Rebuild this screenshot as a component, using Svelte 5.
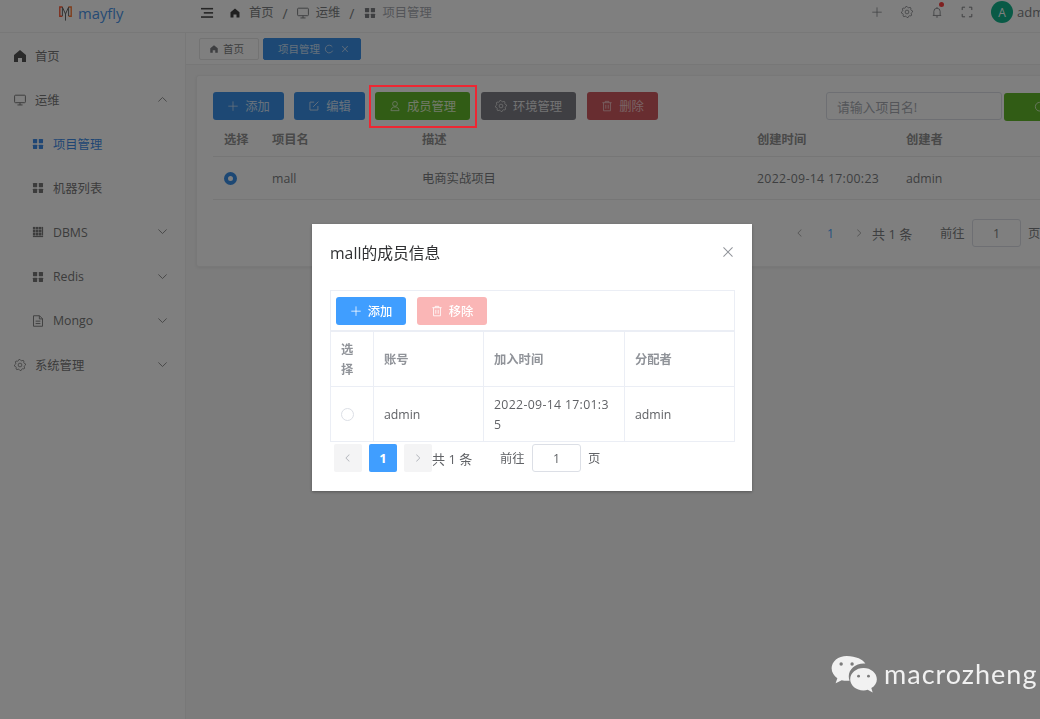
<script>
  function gearPath() {
    const n = 8, pts = [];
    for (let i = 0; i < n * 4; i++) {
      const a = (i / (n * 4)) * Math.PI * 2 - 0.2;
      const r = i % 4 < 2 ? 7.5 : 6;
      pts.push((8 + r * Math.cos(a)).toFixed(2) + ' ' + (8 + r * Math.sin(a)).toFixed(2));
    }
    return 'M' + pts.join('L') + 'Z';
  }
  const gear = gearPath();
  const home = 'M512 128 128 447.936V896h255.936V640H640v256h255.936V447.936z';
  const plus = 'M480 480V128a32 32 0 0 1 64 0v352h352a32 32 0 1 1 0 64H544v352a32 32 0 1 1-64 0V544H128a32 32 0 0 1 0-64h352z';
  const close = 'M764.288 214.592 512 466.88 259.712 214.592a31.936 31.936 0 0 0-45.12 45.12L466.752 512 214.528 764.224a31.936 31.936 0 1 0 45.12 45.184L512 557.184l252.288 252.288a31.936 31.936 0 0 0 45.12-45.12L557.12 512.064l252.288-252.352a31.936 31.936 0 1 0-45.12-45.184z';
  const left = 'M609.408 149.376 277.76 489.6a32 32 0 0 0 0 44.672l331.648 340.352a29.12 29.12 0 0 0 41.728 0 30.592 30.592 0 0 0 0-42.752L339.264 511.936l311.872-319.872a30.592 30.592 0 0 0 0-42.688 29.12 29.12 0 0 0-41.728 0z';
  const right = 'M340.864 149.312a30.592 30.592 0 0 0 0 42.752L652.736 512 340.864 831.872a30.592 30.592 0 0 0 0 42.752 29.12 29.12 0 0 0 41.728 0L714.24 534.336a32 32 0 0 0 0-44.672L382.592 149.376a29.12 29.12 0 0 0-41.728 0z';
</script>

{#snippet fill(d, cls = '')}
  <svg class={'ic ' + cls} viewBox="0 0 1024 1024"><path d={d} fill="currentColor" /></svg>
{/snippet}
{#snippet gearIcon(cls = '')}
  <svg class={'ic ' + cls} viewBox="0 0 16 16" fill="none" stroke="currentColor" stroke-width="1"><path d={gear} stroke-linejoin="round" /><circle cx="8" cy="8" r="2.5" /></svg>
{/snippet}
{#snippet monitor(cls = '')}
  <svg class={'ic ' + cls} viewBox="0 0 16 16" fill="none" stroke="currentColor" stroke-width="1.3"><rect x=".8" y="1.6" width="14.4" height="10" rx="1.2" /><path d="M4.600 14.600h6.800M8 11.600v3" /></svg>
{/snippet}
{#snippet grid(cls = '')}
  <svg class={'ic ' + cls} viewBox="0 0 16 16"><g fill="currentColor"><rect x="1.300" y="1.300" width="5.600" height="5.600" rx=".6" /><rect x="9.100" y="1.300" width="5.600" height="5.600" rx=".6" /><rect x="1.300" y="9.100" width="5.600" height="5.600" rx=".6" /><rect x="9.100" y="9.100" width="5.600" height="5.600" rx=".6" /></g></svg>
{/snippet}
{#snippet dbms(cls = '')}
  <svg class={'ic ' + cls} viewBox="1.400 1.400 13.400 13.400"><g fill="currentColor">{#each [2.4, 5.8, 9.2] as y}{#each [2.4, 5.8, 9.2] as x}<rect x={x} y={y} width="2.900" height="2.900" />{/each}{/each}<rect x="12.600" y="2.400" width="1.200" height="9.700" /><rect x="2.400" y="12.600" width="11.400" height="1.200" /></g></svg>
{/snippet}
{#snippet doc(cls = '')}
  <svg class={'ic ' + cls} viewBox="0 0 16 16" fill="none" stroke="currentColor" stroke-width="1.2"><path d="M2 1h8l4 4v10H2zM9.800 1v4.200H14M4.800 8.200h6.400M4.800 11.400h6.400" /></svg>
{/snippet}
{#snippet chevron(up = false)}
  <svg class="chev" viewBox="0 0 12 12" fill="none" stroke="currentColor" stroke-width="1"><path d={up ? 'M1.500 8.200 6 3.800l4.500 4.400' : 'M1.500 3.800 6 8.200l4.500-4.400'} /></svg>
{/snippet}
{#snippet user()}
  <svg class="ic" viewBox="0 0 16 16" fill="none" stroke="currentColor" stroke-width="1.100"><circle cx="8" cy="5.200" r="3.200" /><path d="M2.600 14.200c0-3.200 2.400-5 5.400-5s5.400 1.800 5.400 5z" /></svg>
{/snippet}
{#snippet edit()}
  <svg class="ic" viewBox="0 0 16 16" fill="none" stroke="currentColor" stroke-width="1.200"><path d="M8.200 2.800H2.600v10.600h10.600V8M6.800 9.200l7-7" /></svg>
{/snippet}
{#snippet trash()}
  <svg class="ic" viewBox="0 0 16 16" fill="none" stroke="currentColor" stroke-width="1.100"><path d="M1.800 3.600h12.400M5.600 3.400V1.800h4.800v1.600M3.400 3.600v10.800h9.200V3.600M6.400 6.400v5.200M9.600 6.400v5.200" /></svg>
{/snippet}
{#snippet search()}
  <svg class="ic" viewBox="0 0 16 16" fill="none" stroke="currentColor" stroke-width="1.100"><circle cx="7.600" cy="7.600" r="5.800" /><path d="m11.800 11.800 2.400 2.400" /></svg>
{/snippet}

<div class="shell">
  <header class="topbar">
    <div class="brand">
      <svg class="logo" viewBox="0 0 13 15" fill="none">
        <path d="M3.600 1H.8v9.200h2.600" stroke="#ff5a35" stroke-width="1.400" />
        <path d="M9.400 1h2.800v9.200H9.600" stroke="#ff7a35" stroke-width="1.400" />
        <path d="M3.400 10V1.200L6.500 8l3.100-6.800V10M6.500 8v6.600" stroke="#666" stroke-width="1" />
      </svg>
      <span class="brand-name">mayfly</span>
    </div>
    <div class="crumbs">
      <svg class="burger" viewBox="0 0 14 12" fill="currentColor"><rect x="0" y=".5" width="13" height="1.700" /><rect x="3" y="5" width="10" height="1.700" /><rect x="0" y="9.500" width="13" height="1.700" /></svg>
      {@render fill(home, 'crumb-home')}
      <span class="crumb-text">首页</span><span class="sep">/</span>
      {@render monitor('crumb-ic')}
      <span class="crumb-text">运维</span><span class="sep">/</span>
      {@render grid('crumb-ic')}
      <span class="crumb-text muted">项目管理</span>
    </div>
    <div class="tools">
      {@render fill(plus, 'tool')}
      {@render gearIcon('tool')}
      <span class="bell"><svg class="ic tool" viewBox="0 0 16 16" fill="none" stroke="currentColor" stroke-width="1.100"><path d="M2.400 12.600h11.200M3.800 12.400V7.200a4.200 4.200 0 0 1 8.400 0v5.200M6.600 14.600h2.800M8 1.400v1.600" /></svg><i class="dot"></i></span>
      <svg class="ic tool" viewBox="0 0 16 16" fill="none" stroke="currentColor" stroke-width="1.300"><path d="M1.600 5.400v-3.800h3.800M10.600 1.600h3.800v3.800M14.400 10.600v3.800h-3.800M5.400 14.400H1.600v-3.800" /></svg>
      <span class="avatar">A</span>
      <span class="uname">admin</span>
    </div>
  </header>

  <div class="body">
    <aside class="side">
      <div class="item top">{@render fill(home, 'mi-home')}<span>首页</span></div>
      <div class="item top">{@render monitor('mi')}<span>运维</span>{@render chevron(true)}</div>
      <div class="item sub active">{@render grid('mi')}<span>项目管理</span></div>
      <div class="item sub">{@render grid('mi')}<span>机器列表</span></div>
      <div class="item sub">{@render dbms('mi')}<span>DBMS</span>{@render chevron()}</div>
      <div class="item sub">{@render grid('mi')}<span>Redis</span>{@render chevron()}</div>
      <div class="item sub">{@render doc('mi')}<span>Mongo</span>{@render chevron()}</div>
      <div class="item top">{@render gearIcon('mi')}<span>系统管理</span>{@render chevron()}</div>
    </aside>

    <main class="main">
      <div class="tags">
        <span class="tag">{@render fill(home, 'tag-ic')}首页</span>
        <span class="tag on">项目管理<svg class="ic tag-ic" viewBox="0 0 12 12" fill="none" stroke="currentColor" stroke-width="1"><path d="M10 3.400A4.600 4.600 0 1 0 10.400 8" /></svg>{@render fill(close, 'tag-ic tag-x')}</span>
      </div>
      <div class="content">
        <section class="card">
          <div class="bar">
            <button class="btn blue">{@render fill(plus)}添加</button>
            <button class="btn blue">{@render edit()}编辑</button>
            <button class="btn green">{@render user()}成员管理</button>
            <button class="btn gray">{@render gearIcon()}环境管理</button>
            <button class="btn red">{@render trash()}删除</button>
            <span class="search-input">请输入项目名!</span>
            <button class="btn green search-btn">{@render search()}</button>
          </div>
          <table class="grid-table">
            <colgroup><col class="c1" /><col class="c2" /><col class="c3" /><col class="c4" /><col class="c5" /></colgroup>
            <thead><tr><th>选择</th><th>项目名</th><th>描述</th><th>创建时间</th><th>创建者</th></tr></thead>
            <tbody><tr><td><i class="radio on"></i></td><td>mall</td><td>电商实战项目</td><td class="date">2022-09-14 17:00:23</td><td>admin</td></tr></tbody>
          </table>
          <div class="pager-main">
            <span class="pg-arrow">{@render fill(left)}</span>
            <span class="pg-num">1</span>
            <span class="pg-arrow">{@render fill(right)}</span>
            <span class="pg-total">共 1 条</span>
            <span class="pg-go">前往</span>
            <span class="pg-input">1</span>
            <span>页</span>
          </div>
        </section>
      </div>
    </main>
  </div>
</div>

<div class="mask"></div>

<div class="dialog">
  <div class="dlg-head">
    <span class="dlg-title">mall的成员信息</span>
    {@render fill(close, 'dlg-close')}
  </div>
  <div class="dlg-tools">
    <button class="btn dlg-blue">{@render fill(plus)}添加</button>
    <button class="btn dlg-red">{@render trash()}移除</button>
  </div>
  <table class="dlg-table">
    <colgroup><col class="d1" /><col class="d2" /><col class="d3" /><col class="d4" /></colgroup>
    <thead><tr><th>选择</th><th>账号</th><th>加入时间</th><th>分配者</th></tr></thead>
    <tbody><tr><td><i class="radio"></i></td><td>admin</td><td class="date">2022-09-14 17:01:35</td><td>admin</td></tr></tbody>
  </table>
  <div class="dlg-pager">
    <span class="dp-box">{@render fill(left)}</span>
    <span class="dp-box cur">1</span>
    <span class="dp-box">{@render fill(right)}</span>
    <span class="dp-total">共 1 条</span>
    <span class="dp-go">前往</span>
    <span class="pg-input">1</span>
    <span>页</span>
  </div>
</div>

<div class="callout"></div>

<div class="mark">
  <svg class="mark-ic" viewBox="0 0 50 42">
    <path d="M17.500 2C8.400 2 1.500 7.800 1.500 15c0 4.200 2.400 8 6 10.400l-1.800 5.400 6.400-3.300c1.800.5 3.600.7 5.400.7 1 0 1.900-.1 2.800-.2-.5-1.500-.8-3-.8-4.600 0-7.400 7-13.400 15.700-13.400.6 0 1.100 0 1.700.1C34.800 5.900 26.900 2 17.500 2z" fill="#f1f1f1" />
    <circle cx="11.500" cy="10.500" r="1.800" fill="#7c7c7c" /><circle cx="23" cy="10.500" r="1.800" fill="#7c7c7c" />
    <path d="M49 26.500C49 20 42.700 14.800 35 14.800S21 20 21 26.500 27.300 38.200 35 38.200c1.500 0 3-.2 4.400-.6l5.200 2.700-1.400-4.500C46.800 33.700 49 30.300 49 26.500z" fill="#f1f1f1" />
    <circle cx="29.800" cy="23.300" r="1.500" fill="#7c7c7c" /><circle cx="40.200" cy="23.300" r="1.500" fill="#7c7c7c" />
  </svg>
  <span class="mark-text">macrozheng</span>
</div>

<style>
  :global(body) {
    margin: 0;
    overflow: hidden;
    background: #f8f8f8;
  }
  :global(#app) {
    font-family: 'Open Sans', 'Noto Sans CJK SC', sans-serif;
    font-size: 12.3px;
    color: #7c7e82;
  }
  .shell { width: 1100px; height: 719px; display: flex; flex-direction: column; }
  .ic { width: 12px; height: 12px; flex: none; display: block; }

  .topbar { height: 33px; flex: none; box-sizing: border-box; padding-bottom: 8px; display: flex; align-items: center; background: #fff; border-bottom: 1px solid #f0f0f0; }
  .brand { width: 186px; flex: none; display: flex; align-items: center; padding-left: 59px; padding-top: 2px; box-sizing: border-box; gap: 6px; }
  .logo { width: 13px; height: 15px; }
  .brand-name { font-size: 14.800px; color: #4c96ea; line-height: 1; }
  .crumbs { display: flex; align-items: center; color: #7c7e82; padding-left: 15px; padding-top: 2px; }
  .burger { width: 13px; height: 12px; color: #4a4a4a; margin-right: 15px; }
  :global(svg.ic.crumb-home) { margin-right: 8px; color: #404040; }
  :global(svg.ic.crumb-ic) { margin-right: 7px; }
  .crumb-text { line-height: 1; }
  .muted { color: #a8abb2; }
  .sep { margin: 0 9px; font-size: 14px; }
  .tools { margin-left: auto; display: flex; align-items: center; color: #7c7e82; }
  :global(svg.ic.tool) { width: 12px; height: 12px; margin-right: 18px; }
  .bell { position: relative; display: block; }
  .dot { position: absolute; top: -4px; left: 8px; width: 5px; height: 5px; border-radius: 50%; background: #ff4040; }
  .avatar { width: 22px; height: 22px; border-radius: 50%; background: #13b58d; color: #fff; display: flex; align-items: center; justify-content: center; font-size: 12px; }
  .uname { margin-left: 4px; width: 83px; font-size: 13px; }

  .body { flex: 1; display: flex; min-height: 0; }
  .side { width: 186px; flex: none; background: #fff; border-right: 1px solid #f0f0f0; box-sizing: border-box; padding-top: 1px; }
  .item { height: 44.100px; display: flex; align-items: center; position: relative; color: #787878; }
  .item.top { padding-left: 14px; }
  .item.sub { padding-left: 32px; }
  .item span { margin-left: 9px; }
  :global(svg.ic.mi) { width: 12px; height: 12px; }
  :global(svg.ic.mi-home) { width: 16px; height: 16px; margin: 0 -2px; color: #555; }
  .item.active, .item.active span { color: #3f8de8; }
  .chev { width: 11px; height: 11px; position: absolute; left: 157px; top: 50%; margin-top: -6px; color: #888; }

  .main { flex: 1; min-width: 0; display: flex; flex-direction: column; }
  .tags { height: 32px; flex: none; background: #fff; border-bottom: 1px solid #eee; box-sizing: border-box; display: flex; align-items: center; padding-left: 13px; gap: 4px; }
  .tag { width: 60px; height: 22px; box-sizing: border-box; display: flex; align-items: center; gap: 4px; white-space: nowrap; font-size: 10.500px; padding: 0 0 0 9px; border: 1px solid #e6e6e6; border-radius: 2px; color: #7c7e82; background: #fff; }
  .tag.on { background: #3b90e8; border-color: #3b90e8; color: #c9e0f7; padding: 0 0 0 14px; width: 98px; }
  :global(svg.ic.tag-ic) { width: 10px; height: 10px; }
  :global(svg.ic.tag-x) { margin-left: 2px; }
  .content { padding: 10px 0 0 10px; }
  .card { background: #fff; border: 1px solid #f0f0f0; border-radius: 3px; height: 192px; box-sizing: border-box; padding: 16px 16px; box-shadow: 0 1px 3px rgba(0, 0, 0, 0.06); }
  .bar { display: flex; align-items: flex-start; height: 30px; }
  .btn { height: 28px; border: 0; border-radius: 3px; display: inline-flex; align-items: center; justify-content: center; gap: 6px; font: inherit; color: #fff; padding: 0; margin: 0; }
  .blue { width: 71px; background: #3b90e8; margin-right: 10px; color: #cfe3f8; }
  .green { width: 95px; background: #62b82a; margin-right: 11px; color: #e2f5d4; }
  .gray { width: 95px; background: #7e7e86; margin-right: 11px; color: #e6e6e6; }
  .red { width: 71px; background: #d05a60; color: #f3c9cb; margin-right: 168px; }
  .search-input { width: 176px; height: 28px; box-sizing: border-box; border: 1px solid #dcdfe6; border-radius: 3px; display: flex; align-items: center; padding-left: 10px; color: #a8abb2; font-size: 12.800px; }
  .search-btn { margin-left: 2px; width: 71px; height: 28px; margin-top: 1px; margin-right: 0; }

  table { border-collapse: collapse; table-layout: fixed; }
  .grid-table { width: 833px; }
  .c1 { width: 48px; } .c2 { width: 150px; } .c3 { width: 335px; } .c4 { width: 149px; } .c5 { width: 151px; }
  .grid-table th { height: 34px; padding: 0 11px; text-align: left; font-weight: 700; color: #929292; border-bottom: 1px solid #ececec; }
  .grid-table td { height: 42px; padding: 0 11px; border-bottom: 1px solid #ececec; color: #7c7e82; }
  .date { letter-spacing: 0.32px; }
  .radio { display: block; width: 13px; height: 13px; box-sizing: border-box; border-radius: 50%; border: 1px solid #dcdfe6; background: #fff; }
  .radio.on { border: 4px solid #3b90e8; }
  .pager-main { display: flex; align-items: center; height: 28px; margin-top: 19px; padding-left: 582px; }
  .pg-arrow { width: 12px; display: block; color: #a0a0a0; }
  :global(.pg-arrow svg.ic) { width: 10px; height: 10px; }
  .pg-num { width: 47px; text-align: center; color: #4aa5ff; font-weight: 500; }
  .pg-total { margin-left: 6px; width: 68px; font-size: 13px; }
  .pg-go { width: 32px; }
  .pg-input { width: 49px; height: 28px; box-sizing: border-box; border: 1px solid #dcdfe6; border-radius: 3px; display: flex; align-items: center; justify-content: center; margin-right: 7px; background: #fff; }

  .mask { position: fixed; inset: 0; background: rgba(0, 0, 0, 0.5); }
  .callout { position: fixed; left: 369px; top: 85px; width: 108px; height: 43px; box-sizing: border-box; border: 2px solid #ee2733; }

  .dialog { position: fixed; left: 312px; top: 224px; width: 440px; height: 267px; background: #fff; box-shadow: 0 1px 3px rgba(0, 0, 0, 0.3); padding: 0 17px 0 18px; box-sizing: border-box; color: #606266; }
  .dlg-head { height: 66px; position: relative; }
  .dlg-title { position: absolute; left: 0; top: 19px; font-size: 15.800px; line-height: 20px; color: #303133; }
  :global(svg.ic.dlg-close) { position: absolute; right: -1px; top: 20px; width: 16px; height: 16px; color: #909399; }
  .dlg-tools { height: 41px; box-sizing: border-box; border: 1px solid #ebeef5; display: flex; align-items: center; padding-left: 5px; gap: 11px; font-weight: 500; }
  .dlg-blue { width: 70px; background: #409eff; }
  .dlg-red { width: 70px; background: #fab6b6; }
  .dlg-table { width: 405px; border-collapse: separate; border-spacing: 0; border-left: 1px solid #ebeef5; border-top: 1px solid #ebeef5; }
  .d1 { width: 43px; } .d2 { width: 110px; } .d3 { width: 141px; } .d4 { width: 110px; }
  .dlg-table th, .dlg-table td { border-right: 1px solid #ebeef5; border-bottom: 1px solid #ebeef5; padding: 1px 10px 0; height: 55px; box-sizing: border-box; text-align: left; line-height: 20px; word-break: break-all; }
  .dlg-table th { color: #909399; font-weight: 700; }
  .dlg-pager { display: flex; align-items: center; height: 28px; margin-top: 2px; padding-left: 4px; }
  .dp-box { width: 28px; height: 28px; margin-right: 7px; background: #f4f4f5; border-radius: 2px; display: flex; align-items: center; justify-content: center; color: #a8abb2; }
  :global(.dp-box svg.ic) { width: 10px; height: 10px; }
  .dp-box.cur { background: #409eff; color: #fff; font-weight: 700; font-size: 13px; }
  .dp-box:nth-child(3) { margin-right: 0; }
  .dp-total { width: 68px; font-size: 13px; }
  .dp-go { width: 32px; }

  .mark { position: fixed; left: 830px; top: 654px; display: flex; align-items: center; gap: 6px; color: #f1f1f1; }
  .mark-ic { width: 48px; height: 40px; display: block; }
  .mark-text { font-family: Lato, sans-serif; font-size: 27px; line-height: 40px; white-space: nowrap; letter-spacing: 1px; }
</style>
